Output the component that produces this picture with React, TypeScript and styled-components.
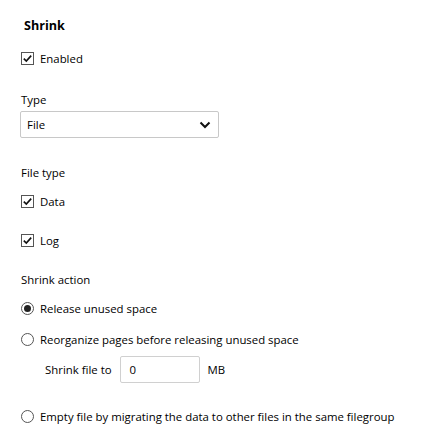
import React from "react";
import styled, { createGlobalStyle } from "styled-components";

const Global = createGlobalStyle`
  html, body { margin: 0; padding: 0; background: #fff; }
  body { font-family: "Open Sans", "Noto Sans", sans-serif; font-size: 11.4px; color: #000; }
`;

const Page = styled.div`
  width: 429px;
  height: 440px;
  padding: 16px 20px 0 20px;
  box-sizing: border-box;
  display: flex;
  flex-direction: column;
`;

const Title = styled.div`
  font-weight: 700;
  font-size: 12.6px;
  padding-left: 4px;
  line-height: 20px;
`;

const Row = styled.label<{ $mt?: number; $ml?: number }>`
  display: flex;
  align-items: center;
  gap: 6px;
  height: 14px;
  margin-top: ${(p) => p.$mt ?? 0}px;
  margin-left: ${(p) => p.$ml ?? 0}px;
`;

const Box = styled.span`
  width: 11px;
  height: 11px;
  border: 1px solid #555;
  background: #fff;
  display: flex;
  align-items: center;
  justify-content: center;
  margin-left: 1px;
`;

const Radio = styled.span<{ $on?: boolean }>`
  width: 11px;
  height: 11px;
  border: 1px solid #555;
  border-radius: 50%;
  background: #fff;
  display: flex;
  align-items: center;
  justify-content: center;
  margin-left: 1px;
  &::after {
    content: "";
    display: ${(p) => (p.$on ? "block" : "none")};
    width: 7px;
    height: 7px;
    border-radius: 50%;
    background: #222;
  }
`;

const Label = styled.div<{ $mt?: number }>`
  margin-top: ${(p) => p.$mt ?? 0}px;
  line-height: 14px;
  padding-left: 1px;
`;

const Select = styled.div`
  margin-top: 4px;
  width: 199px;
  height: 27px;
  box-sizing: border-box;
  border: 1px solid #c8c8c8;
  border-radius: 2px;
  display: flex;
  align-items: center;
  justify-content: space-between;
  padding: 0 7px 0 6px;
`;

const SizeRow = styled.div`
  display: flex;
  align-items: center;
  margin-top: 10px;
  margin-left: 25px;
`;

const Input = styled.div`
  width: 80px;
  height: 27px;
  box-sizing: border-box;
  border: 1px solid #d0d0d0;
  border-radius: 2px;
  display: flex;
  align-items: center;
  padding-left: 9px;
  margin: 0 8px 0 8px;
`;

const Check = () => (
  <svg width="11" height="11" viewBox="0 0 11 11">
    <path d="M1.8 5.6 L4.3 8.1 L9.2 2.6" fill="none" stroke="#111" strokeWidth="1.6" />
  </svg>
);

export default function App() {
  return (
    <Page>
      <Global />
      <Title>Shrink</Title>
      <Row $mt={15}>
        <Box><Check /></Box>
        <span>Enabled</span>
      </Row>
      <Label $mt={28}>Type</Label>
      <Select>
        <span>File</span>
        <svg width="12" height="8" viewBox="0 0 12 8">
          <path d="M1.5 1.5 L6 6 L10.5 1.5" fill="none" stroke="#111" strokeWidth="2" />
        </svg>
      </Select>
      <Label $mt={28}>File type</Label>
      <Row $mt={14}>
        <Box><Check /></Box>
        <span>Data</span>
      </Row>
      <Row $mt={25}>
        <Box><Check /></Box>
        <span>Log</span>
      </Row>
      <Label $mt={26}>Shrink action</Label>
      <Row $mt={14}>
        <Radio $on />
        <span>Release unused space</span>
      </Row>
      <Row $mt={17}>
        <Radio />
        <span>Reorganize pages before releasing unused space</span>
      </Row>
      <SizeRow>
        <span>Shrink file to</span>
        <Input>0</Input>
        <span>MB</span>
      </SizeRow>
      <Row $mt={26}>
        <Radio />
        <span>Empty file by migrating the data to other files in the same filegroup</span>
      </Row>
    </Page>
  );
}
